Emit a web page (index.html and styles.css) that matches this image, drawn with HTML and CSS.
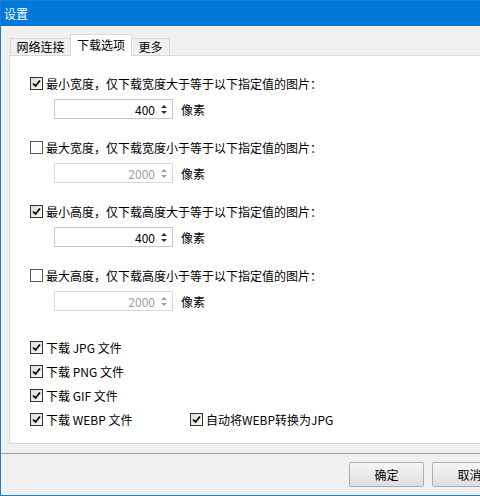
FILE: index.html
```html
<!DOCTYPE html>
<html>
<head>
<meta charset="utf-8">
<meta name="viewport" content="width=device-width, initial-scale=1">
<link rel="stylesheet" href="styles.css">
</head>
<body>
<div class="window">
  <div class="titlebar">设置</div>

  <div class="client">
    <div class="tabs">
      <div class="tab tab-net">网络连接</div>
      <div class="tab tab-down active">下载选项</div>
      <div class="tab tab-more">更多</div>
    </div>

    <div class="panel">
      <div class="group">
        <label class="check"><span class="box on"><svg viewBox="0 0 9 9"><path d="M1 4.5 L3.5 7 L8 1.5" /></svg></span>最小宽度，仅下载宽度大于等于以下指定值的图片：</label>
        <div class="spinrow">
          <div class="spin"><span class="val">400</span><span class="arrows"><i class="up"></i><i class="down"></i></span></div>
          <span class="unit">像素</span>
        </div>
      </div>

      <div class="group">
        <label class="check"><span class="box"></span>最大宽度，仅下载宽度小于等于以下指定值的图片：</label>
        <div class="spinrow">
          <div class="spin off"><span class="val">2000</span><span class="arrows"><i class="up"></i><i class="down"></i></span></div>
          <span class="unit">像素</span>
        </div>
      </div>

      <div class="group">
        <label class="check"><span class="box on"><svg viewBox="0 0 9 9"><path d="M1 4.5 L3.5 7 L8 1.5" /></svg></span>最小高度，仅下载高度大于等于以下指定值的图片：</label>
        <div class="spinrow">
          <div class="spin"><span class="val">400</span><span class="arrows"><i class="up"></i><i class="down"></i></span></div>
          <span class="unit">像素</span>
        </div>
      </div>

      <div class="group">
        <label class="check"><span class="box"></span>最大高度，仅下载高度小于等于以下指定值的图片：</label>
        <div class="spinrow">
          <div class="spin off"><span class="val">2000</span><span class="arrows"><i class="up"></i><i class="down"></i></span></div>
          <span class="unit">像素</span>
        </div>
      </div>

      <div class="types">
        <label class="check row"><span class="box on"><svg viewBox="0 0 9 9"><path d="M1 4.5 L3.5 7 L8 1.5" /></svg></span>下载 JPG 文件</label>
        <label class="check row"><span class="box on"><svg viewBox="0 0 9 9"><path d="M1 4.5 L3.5 7 L8 1.5" /></svg></span>下载 PNG 文件</label>
        <label class="check row"><span class="box on"><svg viewBox="0 0 9 9"><path d="M1 4.5 L3.5 7 L8 1.5" /></svg></span>下载 GIF 文件</label>
        <div class="row pair">
          <label class="check webp"><span class="box on"><svg viewBox="0 0 9 9"><path d="M1 4.5 L3.5 7 L8 1.5" /></svg></span>下载 WEBP 文件</label>
          <label class="check"><span class="box on"><svg viewBox="0 0 9 9"><path d="M1 4.5 L3.5 7 L8 1.5" /></svg></span>自动将WEBP转换为JPG</label>
        </div>
      </div>
    </div>

    <div class="footer">
      <button class="btn">确定</button>
      <button class="btn">取消</button>
    </div>
  </div>
</div>
</body>
</html>
```

FILE: styles.css
```css
* {box-sizing: border-box;}

body {
  margin: 0;
  font-family: "Noto Sans CJK SC", "Liberation Sans", sans-serif;
  font-size: 12px;
  color: #000;
  background: #f0f0f0;
}

.window {
  width: 480px;
  height: 496px;
  display: flex;
  flex-direction: column;
  border-left: 1px solid #1a7fd4;
  border-bottom: 1px solid #1a7fd4;
  overflow: hidden;
}

.titlebar {
  height: 26px;
  line-height: 25px;
  padding-left: 3px;
  background: #0078d7;
  border-top: 1px solid #1a84da;
  color: #fff;
  font-size: 12px;
}

.client {
  flex: 1;
  display: flex;
  flex-direction: column;
  align-items: flex-start;
  padding: 8px 0 0 8px;
  background: #f0f0f0;
  overflow: hidden;
}

/* tab strip */
.tabs {
  display: flex;
  align-items: flex-end;
  height: 21px;
  padding-left: 1px;
  position: relative;
  z-index: 1;
}

.tab {
  height: 17px;
  line-height: 15px;
  text-align: center;
  background: #f0f0f0;
  border: 1px solid #d9d9d9;
  border-bottom: none;
}

.tab-net {width: 60px; border-right: none;}
.tab-down {width: 62px;}
.tab-more {width: 38px; border-left: none;}

.tab.active {
  height: 22px;
  line-height: 19px;
  background: #fff;
  margin-bottom: -1px;
}

.panel {
  flex: none;
  width: 500px;
  height: 389px;
  background: #fff;
  border: 1px solid #d9d9d9;
  border-right: none;
  padding: 17px 0 0 20px;
}

.group {
  height: 64px;
}

.check {
  display: flex;
  align-items: center;
  height: 20px;
  white-space: nowrap;
}

.box {
  width: 13px;
  height: 13px;
  margin-right: 3px;
  border: 1px solid #5a5a5a;
  background: #fff;
  display: flex;
  align-items: center;
  justify-content: center;
}

.box.on {
  border-color: #333;
  background: linear-gradient(135deg, #dedad3, #fafafa);
}

.box svg {
  width: 9px;
  height: 9px;
  fill: none;
  stroke: #000;
  stroke-width: 1.7;
}

.spinrow {
  display: flex;
  align-items: center;
  margin: 6px 0 0 24px;
}

.spin {
  width: 119px;
  height: 20px;
  border: 1px solid #c8c8c8;
  display: flex;
  align-items: center;
  justify-content: flex-end;
  padding-right: 5px;
}

.spin .val {
  margin-right: 6px;
}

.arrows {
  display: flex;
  flex-direction: column;
  gap: 3px;
}

.arrows i {
  display: block;
  width: 0;
  height: 0;
  border-left: 3px solid transparent;
  border-right: 3px solid transparent;
}

.arrows .up {border-bottom: 3px solid #333;}
.arrows .down {border-top: 3px solid #333;}

.spin.off {border-color: #d9d9d9; color: #a0a0a0;}
.spin.off .up {border-bottom-color: #a0a0a0;}
.spin.off .down {border-top-color: #a0a0a0;}

.unit {
  margin-left: 8px;
}

.types {
  padding-top: 6px;
}

.row {
  height: 24px;
}

.pair {
  display: flex;
  align-items: center;
}

.webp {
  width: 160px;
}

/* dialog buttons */
.footer {
  flex: 1;
  align-self: stretch;
  display: flex;
  align-items: flex-start;
  padding: 8px 0 0 348px;
  margin: 9px 0 0 -8px;
  border-top: 1px solid #a0a0a0;
  gap: 8px;
}

.btn {
  flex: none;
  width: 75px;
  height: 25px;
  font-family: inherit;
  font-size: 12px;
  color: #000;
  border: 1px solid #adadad;
  border-radius: 2px;
  background: linear-gradient(#f6f6f6, #dedede);
  padding: 0;
}
```
